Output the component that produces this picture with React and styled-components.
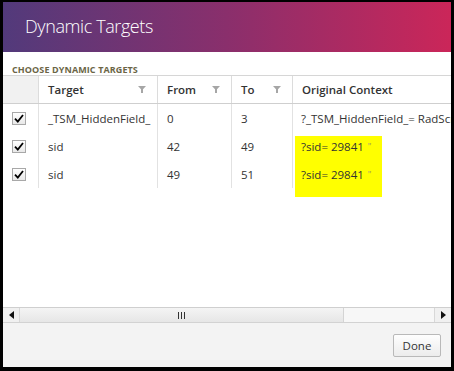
import React from "react";
import styled, { createGlobalStyle } from "styled-components";

const GlobalStyle = createGlobalStyle`
  html, body { margin: 0; padding: 0; background: #000; }
  * { box-sizing: border-box; }
`;

const COLS = "36px 119px 74px 61px 240px";

const Frame = styled.div`
  width: 454px;
  height: 371px;
  border-style: solid;
  border-color: #000;
  border-width: 2px 3px 4px 3px;
  display: flex;
  flex-direction: column;
  overflow: hidden;
  font-family: "Open Sans", "Liberation Sans", sans-serif;
`;

const Header = styled.div`
  height: 50px;
  flex: none;
  display: flex;
  align-items: center;
  padding-left: 20px;
  background: linear-gradient(to right, #523a7b 0%, #8a2f6c 50%, #cb2659 100%);
`;

const Title = styled.h1`
  margin: 0;
  font-size: 18px;
  font-weight: 300;
  letter-spacing: -0.4px;
  color: #fff;
  padding: 0 0 2px 2px;
`;

const Body = styled.div`
  flex: 1;
  display: flex;
  flex-direction: column;
  background: #fff;
  min-height: 0;
`;

const SectionLabel = styled.div`
  height: 23px;
  flex: none;
  padding: 11px 0 0 9px;
  font-size: 9px;
  font-weight: 700;
  color: #6b6546;
  letter-spacing: 0.1px;
`;

const Grid = styled.div`
  flex: 1;
  position: relative;
  z-index: 0;
  overflow: hidden;
  border-top: 1px solid #d6d6d6;
  background: #fff;
`;

const Row = styled.div`
  display: grid;
  grid-template-columns: ${COLS};
  height: 28px;
  border-bottom: ${(p) => (p.$head ? "1px solid #cfcfcf" : "none")};
`;

const HeadCell = styled.div`
  display: flex;
  align-items: center;
  justify-content: space-between;
  padding: 0 11px 0 9px;
  border-right: 1px solid #dcdcdc;
  background: ${(p) => (p.$gray ? "#f1f1f1" : "#fff")};
  font-size: 11.5px;
  font-weight: 600;
  color: #333;
  white-space: nowrap;
`;

const Cell = styled.div`
  position: relative;
  display: flex;
  align-items: center;
  padding-left: 9px;
  border-right: 1px solid #e2e2e2;
  font-size: 11.5px;
  color: #333;
  white-space: nowrap;
  overflow: hidden;
`;

const ContextCell = styled(Cell)`
  overflow: visible;
  padding-left: 8px;
`;

const Highlight = styled.span`
  position: absolute;
  left: 2px;
  top: 4px;
  width: 87px;
  height: 61px;
  background: #ffff00;
  z-index: -1;
`;

const Quote = styled.span`
  color: #9a9a6a;
  font-size: 9px;
  margin-left: 4px;
  align-self: flex-start;
  margin-top: 8px;
`;

const CheckBox = styled.span`
  width: 14px;
  height: 13px;
  border: 1px solid #a8a8a8;
  background: linear-gradient(#ffffff, #e8e8e8);
  display: flex;
  align-items: center;
  justify-content: center;
`;

const Scrollbar = styled.div`
  height: 16px;
  flex: none;
  display: flex;
  border-top: 1px solid #cfcfcf;
  border-bottom: 1px solid #d2d2d2;
  background: #f7f7f7;
`;

const ArrowButton = styled.div`
  width: 17px;
  display: flex;
  align-items: center;
  justify-content: center;
  background: #f0f0f0;
  border-${(p) => (p.$left ? "right" : "left")}: 1px solid #d8d8d8;
`;

const Thumb = styled.div`
  width: 324px;
  display: flex;
  align-items: center;
  justify-content: center;
  background: linear-gradient(#f4f4f4, #e6e6e6);
  border-right: 1px solid #d4d4d4;
`;

const Track = styled.div`
  flex: 1;
`;

const Footer = styled.div`
  height: 44px;
  flex: none;
  background: #f3f3f3;
  display: flex;
  justify-content: flex-end;
  align-items: flex-start;
  padding: 11px 10px 0 0;
`;

const Button = styled.button`
  width: 48px;
  height: 23px;
  border: 1px solid #b9b9b9;
  border-radius: 2px;
  background: linear-gradient(#fefefe, #ececec);
  font-family: "Open Sans", "Liberation Sans", sans-serif;
  font-size: 11.5px;
  color: #333;
  padding: 0;
`;

const Funnel = () => (
  <svg width="8" height="7" viewBox="0 0 8 7">
    <path d="M0 0H8L5 3.2V7H3V3.2Z" fill="#a6a6a6" />
  </svg>
);

const Check = () => (
  <svg width="10" height="9" viewBox="0 0 10 9">
    <path d="M1 4.6L3.8 7.6L9 1" fill="none" stroke="#000" strokeWidth="1.8" />
  </svg>
);

const Arrow = ({ left }) => (
  <svg width="5" height="8" viewBox="0 0 5 8">
    <path d={left ? "M5 0V8L0 4Z" : "M0 0V8L5 4Z"} fill="#111" />
  </svg>
);

const Grip = () => (
  <svg width="7" height="7" viewBox="0 0 7 7">
    <path d="M0.5 0V7M3.5 0V7M6.5 0V7" stroke="#333" strokeWidth="1" />
  </svg>
);

const rows = [
  { target: "_TSM_HiddenField_", from: 0, to: 3, context: "?_TSM_HiddenField_= RadScriptManager" },
  { target: "sid", from: 42, to: 49, context: "?sid= 29841", mark: true, hl: true },
  { target: "sid", from: 49, to: 51, context: "?sid= 29841", mark: true },
];

export default function App() {
  return (
    <>
      <GlobalStyle />
      <Frame>
        <Header>
          <Title>Dynamic Targets</Title>
        </Header>
        <Body>
          <SectionLabel>CHOOSE DYNAMIC TARGETS</SectionLabel>
          <Grid>
            <Row $head>
              <HeadCell $gray />
              <HeadCell>Target<Funnel /></HeadCell>
              <HeadCell>From<Funnel /></HeadCell>
              <HeadCell>To<Funnel /></HeadCell>
              <HeadCell>Original Context</HeadCell>
            </Row>
            {rows.map((r, i) => (
              <Row key={i}>
                <Cell><CheckBox><Check /></CheckBox></Cell>
                <Cell>{r.target}</Cell>
                <Cell>{r.from}</Cell>
                <Cell>{r.to}</Cell>
                <ContextCell>
                  {r.hl && <Highlight />}
                  {r.context}
                  {r.mark && <Quote>"</Quote>}
                </ContextCell>
              </Row>
            ))}
          </Grid>
          <Scrollbar>
            <ArrowButton $left><Arrow left /></ArrowButton>
            <Thumb><Grip /></Thumb>
            <Track />
            <ArrowButton><Arrow /></ArrowButton>
          </Scrollbar>
          <Footer>
            <Button>Done</Button>
          </Footer>
        </Body>
      </Frame>
    </>
  );
}
